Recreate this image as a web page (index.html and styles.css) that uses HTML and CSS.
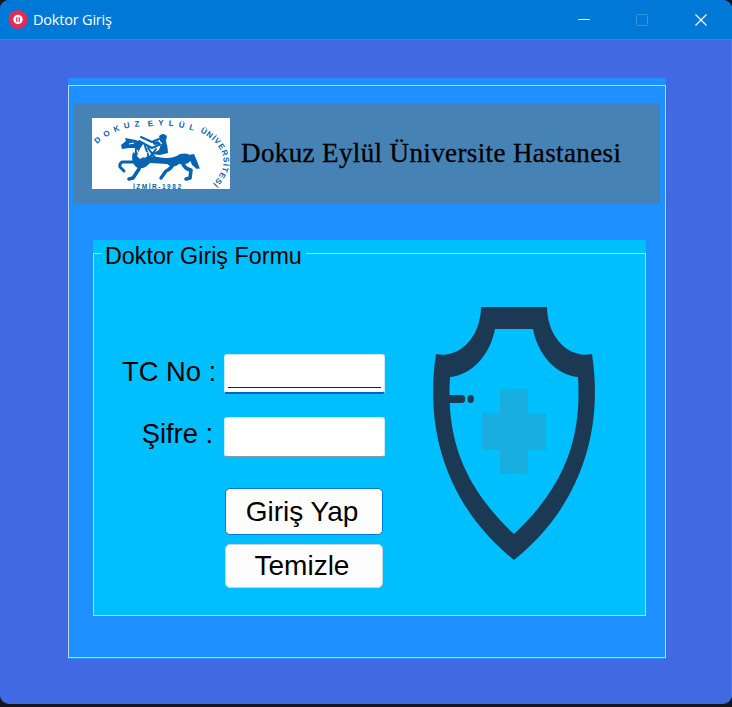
FILE: index.html
```html
<!DOCTYPE html>
<html lang="tr">
<head>
<meta charset="utf-8">
<title>Doktor Giriş</title>
<link rel="stylesheet" href="styles.css">
</head>
<body>
<div class="window">
  <header class="titlebar">
    <svg class="app-icon" width="20" height="20" viewBox="0 0 20 20">
      <circle cx="10" cy="9.500" r="9.5" fill="#e02d55"/>
      <circle cx="10" cy="9.5" r="4.7" fill="#fff"/>
      <path d="M8.8 7.3v4.600M11.2 7.3v4.600" stroke="#d9345d" stroke-width="1.3"/>
    </svg>
    <span class="caption">Doktor Giriş</span>
    <div class="controls">
      <svg width="58" height="39"><path d="M18 19.5h12" stroke="#fff"/></svg>
      <svg width="58" height="39"><rect x="18.5" y="14.5" width="11" height="11" rx="1" fill="none" stroke="#3394df"/></svg>
      <svg width="58" height="39"><path d="M19.5 14.5l11 11M30.500 14.5l-11 11" stroke="#fff" stroke-width="1.2"/></svg>
    </div>
  </header>
  <main class="client">
    <section class="outer">
      <div class="outer-frame">
        <div class="banner">
          <svg class="logo" width="138" height="72" viewBox="0 0 138 72">
            <defs>
              <path id="arcLeft" d="M5 26Q24 9 49 8.500"/>
              <path id="arcMid" d="M56 8.500Q80 5 105 14"/>
              <path id="arcRight" d="M108 14C132 26 142 48 117 69"/>
            </defs>
            <rect width="138" height="71" fill="#fff"/>
            <g class="logo-text">
              <text><textPath href="#arcLeft" textLength="47">DOKUZ</textPath></text>
              <text><textPath href="#arcMid" textLength="46">EYLÜL</textPath></text>
              <text><textPath href="#arcRight" textLength="65">ÜNİVERSİTESİ</textPath></text>
              <text class="year" x="41" y="70.500" textLength="48">İZMİR-1982</text>
            </g>
            <g fill="none" stroke="#0864b0" stroke-linecap="round" stroke-linejoin="round">
              <path d="M45 44H30q-3 2-2 5l4 4" stroke-width="3"/>
              <path d="M48 43l-1 8-6 9-4 1" stroke-width="3.6"/>
              <path d="M82 43q-2 8-8 10l-5 7" stroke-width="3.4"/>
              <path d="M90 43q2 8 9 9l-1 8-4 1" stroke-width="3.6"/>
              <path d="M95 39q7 1 7 7l3 3" stroke-width="3.6"/>
              <path d="M49 19l11 5 7-3M47 23l13 7 9-4M45 24l-2 16M53 28l4 12M56 30l8 11M64 31l-7 9" stroke-width="2"/>
            </g>
            <g fill="#0864b0">
              <path d="M29 27l5-4-1-3 11 2 7 4-3 5-4 9-1-10-6 0-7 1z"/>
              <path d="M41 34l7 7q6-4 18-2 14 3 22-3 10-2 12 5-4 7-13 5-6 5-12 0l-17-1q-7 8-14 4-6-6-3-15z"/>
              <path d="M67 18q4-4 8 0l-1 5q2 7 2 12l-8 2-9-1 8-4 2-6-7 1-2-3 8-1z"/>
              <path d="M96 37l6-1 3 7 3 8-8-4z"/>
            </g>
            <path d="M37 26l5-1M45 32l2 5 2-7M50 30l3 9 2-5M67 23l3 3M74 38l10-1" stroke="#fff" stroke-width="1.2" fill="none"/>
          </svg>
          <h1>Dokuz Eylül Üniversite Hastanesi</h1>
        </div>
        <section class="login">
          <fieldset class="login-frame">
            <legend>Doktor Giriş Formu</legend>
            <form class="fields">
              <label for="tc">TC No :</label>
              <div class="input focused" id="tc"><span class="mask"></span></div>
              <label class="pass" for="sifre">Şifre :</label>
              <div class="input second" id="sifre"></div>
              <div class="buttons">
                <button type="button" class="primary">Giriş Yap</button>
                <button type="button">Temizle</button>
              </div>
            </form>
            <svg class="shield" width="166" height="256" viewBox="0 0 166 256">
              <path fill="#1c3954" fill-rule="evenodd" d="M50 1H116C116 28 135 53 161 48C174 134 143 206 83 254C23 206-8 134 5 48C31 53 50 28 50 1ZM64 23C59 49 41 69 19 71C15 135 34 182 83 228C132 182 151 135 147 71C125 69 107 49 102 23Z"/>
              <rect x="16" y="89" width="18" height="8" rx="3" fill="#1c3954"/>
              <ellipse cx="39.700" cy="93" rx="3.200" ry="4" fill="#1c3954"/>
              <path fill="#19aee0" d="M69 83H97V107H115V144H97V168H69V144H51V107H69Z"/>
            </svg>
          </fieldset>
        </section>
      </div>
    </section>
  </main>
</div>
</body>
</html>
```
FILE: styles.css
```css
* { box-sizing: border-box; }
body {
  margin: 0;
  height: 707px;
  overflow: hidden;
  background: #14171f;
  color: #000;
  font-family: "Liberation Sans", sans-serif;
}
.window {
  height: 704px;
  display: flex;
  flex-direction: column;
  overflow: hidden;
  border-radius: 9px;
  background: #4169e1;
  border-bottom: 1px solid #2678d8;
}
.titlebar {
  height: 39px;
  flex: none;
  display: flex;
  align-items: center;
  padding-left: 8px;
  background: #0078d7;
}
.caption {
  margin-left: 5px;
  color: #fff;
  font: 14.5px "Open Sans", sans-serif;
  letter-spacing: -0.2px;
}
.controls { display: flex; margin-left: auto; margin-right: -2px; }
.client {
  flex: 1;
  padding: 38px 65px 45px 68px;
  border: solid #5077e3;
  border-width: 1px 1px 0 0;
}
.outer { height: 581px; padding-top: 7px; background: #1e90ff; }
.outer-frame {
  height: 573px;
  border: 1px solid #bcd5ef;
  padding: 17px 5px 0 4px;
}
.banner {
  height: 101px;
  display: flex;
  align-items: center;
  background: #4682b4;
  padding-left: 19px;
}
.logo { flex: none; }
.logo-text {
  fill: #0864b0;
  font: bold 8px "Liberation Sans", sans-serif;
}
.year { font-size: 6.5px; }
h1 {
  margin: 0 0 0 11px;
  font: 27px "Liberation Serif", serif;
  letter-spacing: 0.38px;
  -webkit-text-stroke: 0.3px #000;
  white-space: nowrap;
}
.login {
  width: 553px;
  height: 376px;
  margin: 36px 0 0 20px;
  background: #00bfff;
}
.login-frame {
  height: 376px;
  min-width: 0;
  margin: 0;
  padding: 0;
  display: flex;
  border: 1px solid #a5dcef;
}
legend {
  height: 27px;
  margin-left: 8px;
  padding: 3px 4px 0 3px;
  font-size: 23.3px;
  line-height: 27px;
  white-space: nowrap;
}
.fields {
  width: 291px;
  display: grid;
  grid-template-columns: 130px 161px;
  grid-template-rows: 40px 40px 99px;
  row-gap: 23px;
  padding-top: 87px;
  align-content: start;
}
label {
  font-size: 27.3px;
  line-height: 35px;
  text-align: right;
  padding-right: 8px;
  white-space: nowrap;
}
label.pass { padding-right: 11px; line-height: 34px; }
.input {
  height: 40px;
  border: 1px solid #c9eafa;
  border-bottom-color: #8799a5;
  border-radius: 3px;
  background: #fff;
}
.focused { border-bottom: 2px solid #0067c0; padding: 32px 3px 0; }
.mask { display: block; height: 1px; background: #222; }
.buttons {
  grid-column: 2;
  display: flex;
  flex-direction: column;
  gap: 9px;
  margin-top: 8px;
  padding: 0 2px 0 1px;
}
button {
  flex: none;
  height: 44px;
  padding: 0 4px 0 0;
  border: 1px solid #c5d3db;
  border-radius: 5px;
  background: #fdfdfd;
  color: #000;
  font: 28px "Liberation Sans", sans-serif;
}
.primary { height: 47px; border-color: #0078d4; }
.shield { flex: none; margin: 39px 0 0 46px; }
```
